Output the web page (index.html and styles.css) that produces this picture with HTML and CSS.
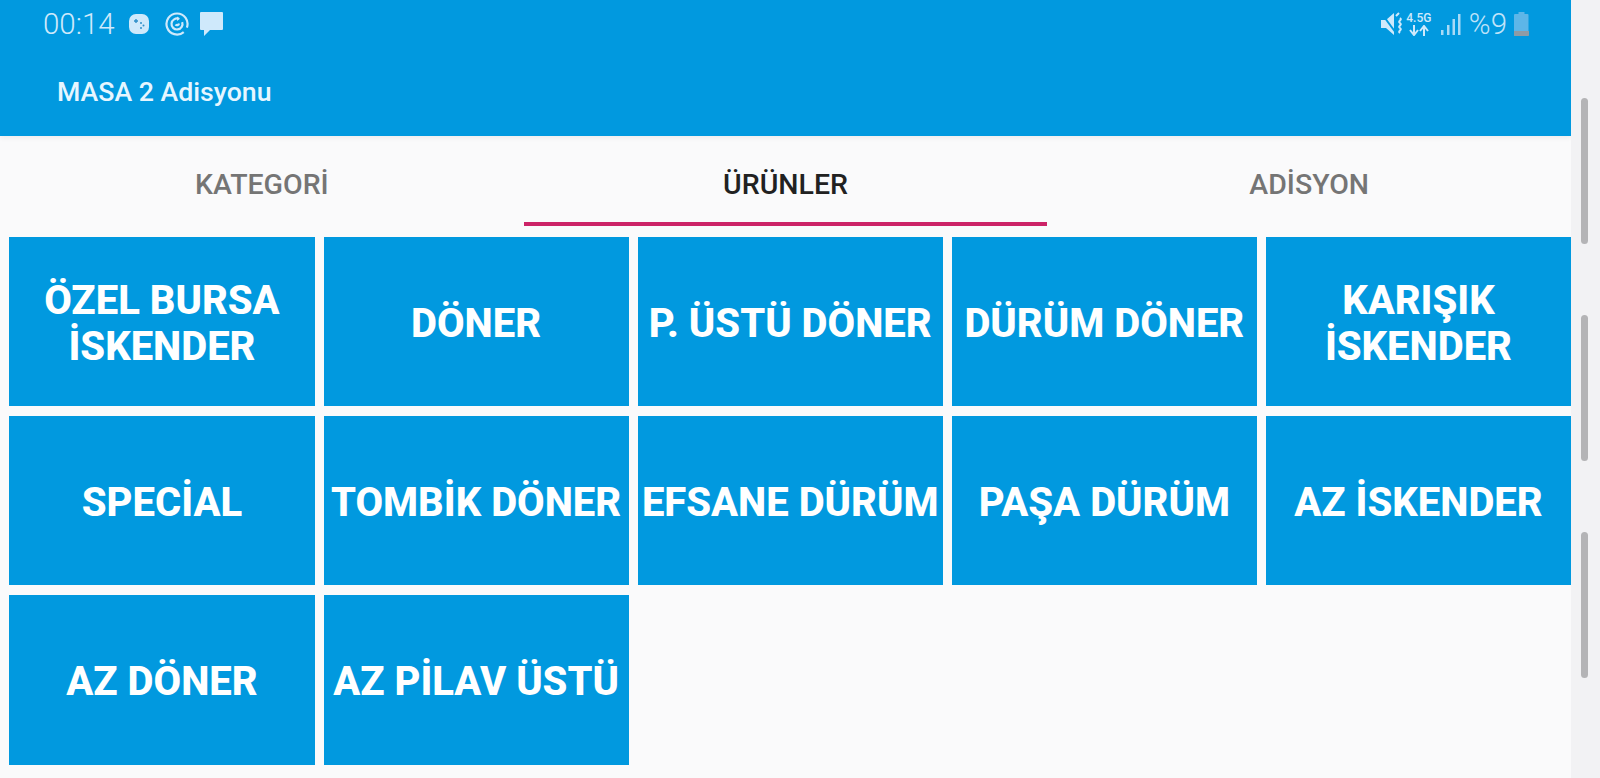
FILE: index.html
```html
<!DOCTYPE html>
<html lang="tr">
<head>
<meta charset="utf-8">
<title>MASA 2 Adisyonu</title>
<link rel="stylesheet" href="styles.css">
</head>
<body>
<div class="app">
  <main class="main">
    <header class="appbar">
      <div class="status">
        <div class="status-left">
          <span class="clock">00:14</span>
          <svg class="ic" width="22" height="22" viewBox="0 0 22 22"><rect x="1" y="1" width="20" height="20" rx="7" fill="#cfe9fb"/><path d="M6 8h4M8 6v4" stroke="#2f8fc9" stroke-width="1.4"/><circle cx="13" cy="10" r="1" fill="#2f8fc9"/><circle cx="15.500" cy="12.500" r="1" fill="#2f8fc9"/><circle cx="13" cy="15" r="1" fill="#2f8fc9"/></svg>
          <svg class="ic ic-swirl" width="24" height="24" viewBox="0 0 24 24" fill="none" stroke="#cfe9fb" stroke-width="2.200"><path d="M18.750 20.040A10.500 10.500 0 1 1 21.870 15.600"/><path d="M17.170 10.120A5.500 5.500 0 1 1 13.880 6.830"/><path d="M10.500 12.500a2 2 0 0 0 3.500 -1"/><path d="M12 4.500l3 2.300-3 2.300z" fill="#cfe9fb" stroke="none"/></svg>
          <svg class="ic ic-chat" width="25" height="24" viewBox="0 0 25 24"><path d="M2 0h21a1 1 0 0 1 1 1v16a1 1 0 0 1-1 1H11l-6 6v-6H2a1 1 0 0 1-1-1V1a1 1 0 0 1 1-1z" fill="#cfe9fb"/></svg>
        </div>
        <div class="status-right">
          <svg width="24" height="24" viewBox="0 0 24 24"><path d="M1 8h5l8-7v22l-8-7H1z" fill="#cfe9fb"/><path d="M2 2l14 19" stroke="#0199df" stroke-width="2"/><path d="M19 1l-3 3M20 6c3 2-3 3 0 5s-3 3 0 5 -3 3 0 5" fill="none" stroke="#cfe9fb" stroke-width="2"/></svg>
          <div class="net"><span class="net-type">4.5G</span><svg width="24" height="11" viewBox="0 0 24 11"><path d="M7 0v9M3 5l4 5 4-5M17 11V2M13 6l4-5 4 5" fill="none" stroke="#cfe9fb" stroke-width="2"/></svg></div>
          <svg class="signal" width="20" height="23" viewBox="0 0 20 23" fill="#a9daf6"><rect x="0" y="17" width="2.500" height="5"/><rect x="6" y="12" width="2.500" height="10"/><rect x="11.500" y="6" width="2.500" height="16"/><rect x="17" y="1" width="2.500" height="21"/></svg>
          <span class="battery-text">%9</span>
          <svg width="15" height="24" viewBox="0 0 15 24"><path d="M4.500 0h6v2h3a1 1 0 0 1 1 1v20a1 1 0 0 1-1 1H1a1 1 0 0 1-1-1V3a1 1 0 0 1 1-1h3.500z" fill="#5db6e8"/><path d="M0 19h15v4a1 1 0 0 1-1 1H1a1 1 0 0 1-1-1z" fill="#8e9ba5"/></svg>
        </div>
      </div>
      <h1 class="title">MASA 2 Adisyonu</h1>
    </header>
    <nav class="tabs">
      <div class="tab">KATEGORİ</div>
      <div class="tab tab-active">ÜRÜNLER</div>
      <div class="tab">ADİSYON</div>
    </nav>
    <section class="grid">
      <button class="tile">ÖZEL BURSA İSKENDER</button>
      <button class="tile">DÖNER</button>
      <button class="tile">P. ÜSTÜ DÖNER</button>
      <button class="tile">DÜRÜM DÖNER</button>
      <button class="tile">KARIŞIK İSKENDER</button>
      <button class="tile">SPECİAL</button>
      <button class="tile">TOMBİK DÖNER</button>
      <button class="tile">EFSANE DÜRÜM</button>
      <button class="tile">PAŞA DÜRÜM</button>
      <button class="tile">AZ İSKENDER</button>
      <button class="tile">AZ DÖNER</button>
      <button class="tile">AZ PİLAV ÜSTÜ</button>
    </section>
  </main>
  <aside class="rail">
    <span class="rail-thumb"></span>
    <span class="rail-thumb"></span>
    <span class="rail-thumb"></span>
  </aside>
</div>
</body>
</html>
```
FILE: styles.css
```css
* { box-sizing: border-box; }
html, body { margin: 0; height: 100%; overflow: hidden; }
body { font-family: Roboto, "Liberation Sans", sans-serif; background: #fafafa; }
.app { display: flex; height: 778px; }
.main { width: 1571px; flex: none; display: flex; flex-direction: column; background: #fafafb; }
.appbar { height: 136px; background: #0199df; padding: 10px 42px 0 43px; flex: none; box-shadow: 0 2px 5px rgba(0, 0, 0, 0.06); position: relative; }
.status { display: flex; justify-content: space-between; align-items: center; height: 28px; }
.status-left { display: flex; align-items: center; gap: 11px; }
.status-right { display: flex; align-items: center; gap: 5px; }
.clock { font-size: 29.500px; font-weight: 300; color: #cfe9fb; margin-right: 2px; line-height: 28px; }
.ic { display: block; }
.ic-swirl { margin-left: 4px; }
.ic-chat { margin-left: -1px; }
.net { display: flex; flex-direction: column; align-items: center; width: 26px; margin-left: -3px; }
.net-type { font-size: 12px; font-weight: 500; color: #cfe9fb; line-height: 13px; }
.signal { margin: 0 3px 0 4px; }
.battery-text { font-size: 29.500px; font-weight: 300; color: #bfe3f9; line-height: 28px; margin-right: 2px; }
.title { margin: 39px 0 0 14px; font-size: 26.700px; font-weight: 500; color: #e6f6ff; line-height: 30px; }
.tabs { display: flex; height: 100px; flex: none; padding-bottom: 10px; }
.tab { flex: 1; display: flex; align-items: center; justify-content: center; font-size: 28.500px; font-weight: 500; color: #757575; padding-top: 10px; border-bottom: 4px solid transparent; }
.tab-active { color: #212121; border-bottom-color: #cc2367; }
.grid { display: grid; grid-template-columns: repeat(5, 1fr); grid-auto-rows: 169.700px; gap: 9.500px 9px; padding-left: 9.400px; margin-top: 0.500px; }
.tile { border: 0; padding: 5px 2px 0; background: #0199df; color: #fff; font: 800 40px/46px Roboto, "Liberation Sans", sans-serif; text-align: center; }
.rail { flex: 1; position: relative; display: flex; flex-direction: column; align-items: center; background: #f2f2f4; padding: 98px 3px 0 0; gap: 71px; }
.rail-thumb { width: 7px; height: 146px; border-radius: 4px; background: #b4b4b6; flex: none; }
```
